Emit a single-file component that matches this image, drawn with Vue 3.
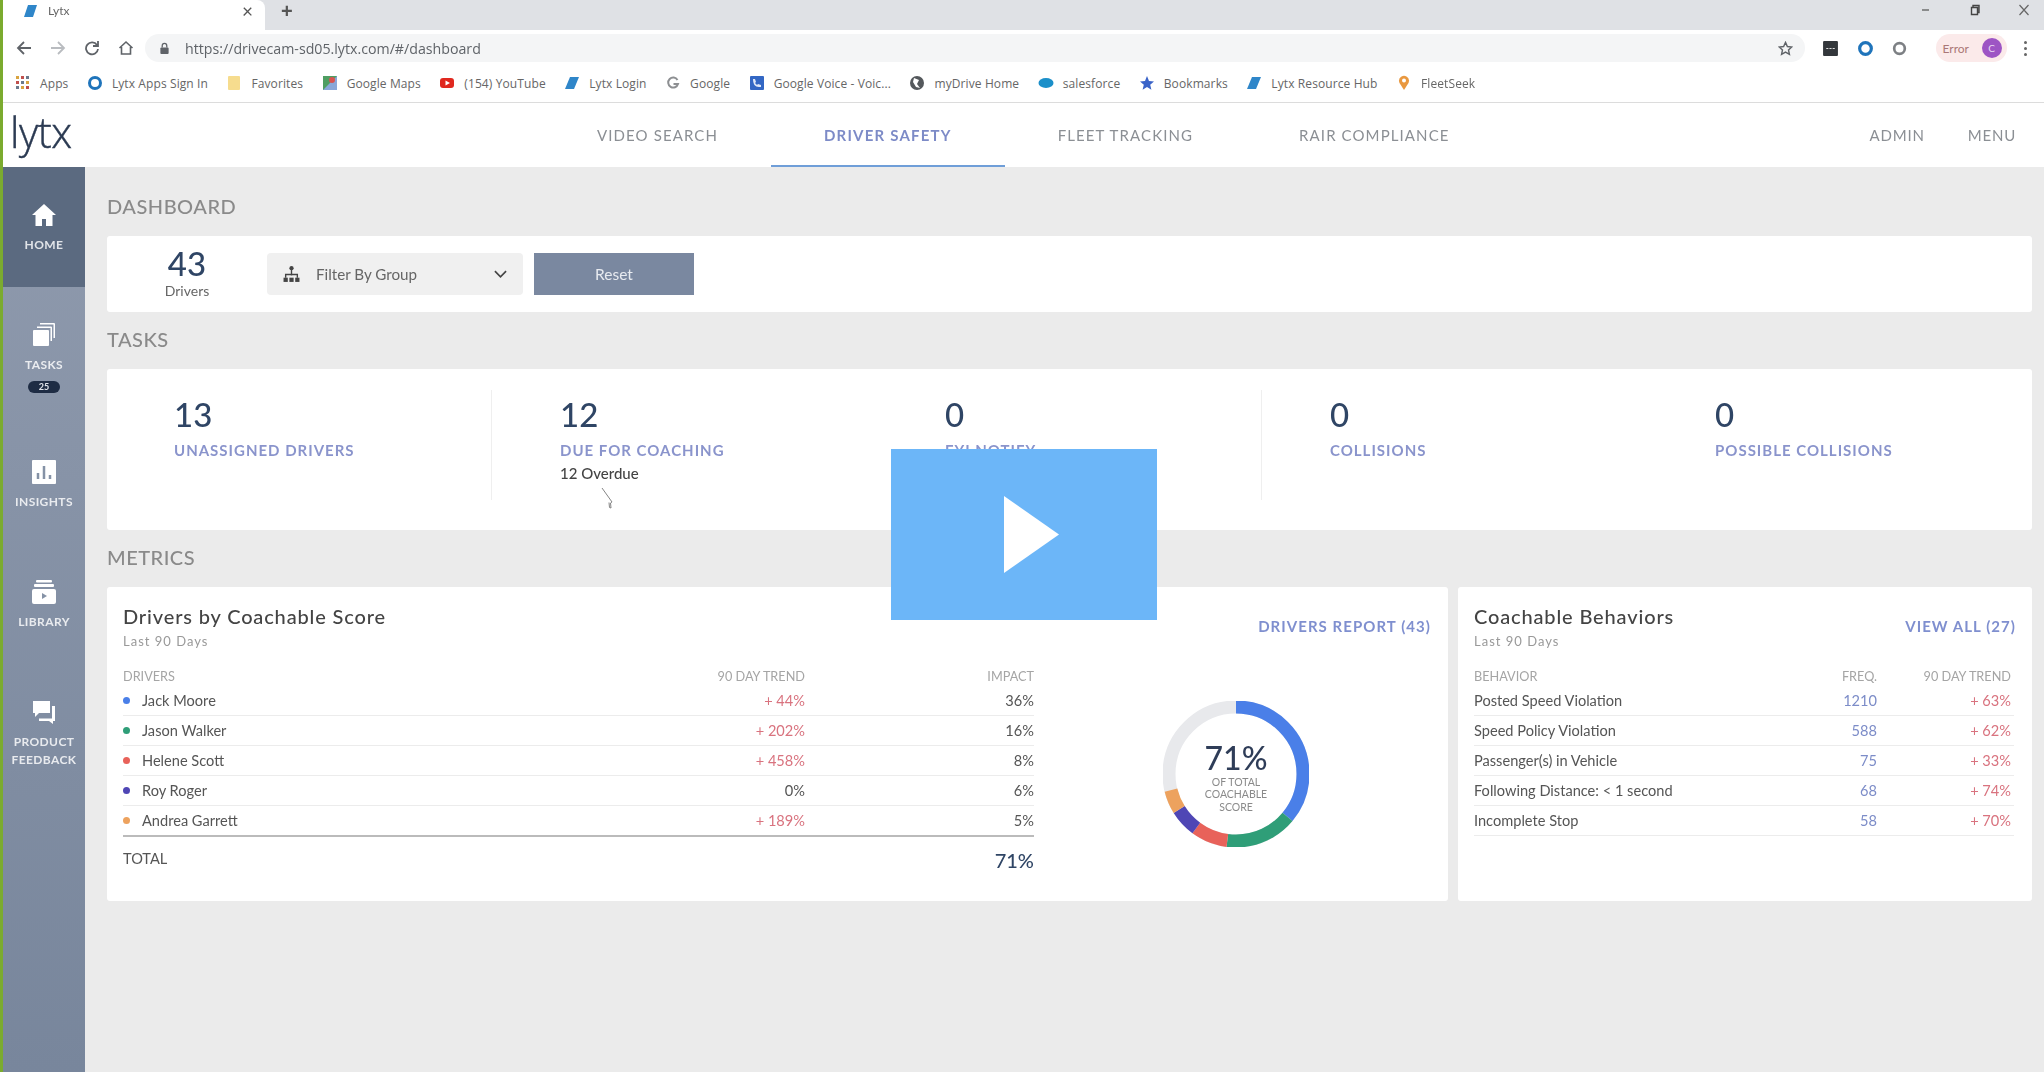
<script setup>
const bookmarks = [
  { label: 'Apps', icon: 'apps' },
  { label: 'Lytx Apps Sign In', icon: 'ring' },
  { label: 'Favorites', icon: 'folder' },
  { label: 'Google Maps', icon: 'maps' },
  { label: '(154) YouTube', icon: 'youtube' },
  { label: 'Lytx Login', icon: 'lytx' },
  { label: 'Google', icon: 'google' },
  { label: 'Google Voice - Voic...', icon: 'voice' },
  { label: 'myDrive Home', icon: 'globe' },
  { label: 'salesforce', icon: 'cloud' },
  { label: 'Bookmarks', icon: 'star' },
  { label: 'Lytx Resource Hub', icon: 'lytx' },
  { label: 'FleetSeek', icon: 'pin' },
];

const tasks = [
  { count: 13, label: 'UNASSIGNED DRIVERS', line: true },
  { count: 12, label: 'DUE FOR COACHING', sub: '12 Overdue' },
  { count: 0, label: 'FYI NOTIFY', line: true },
  { count: 0, label: 'COLLISIONS' },
  { count: 0, label: 'POSSIBLE COLLISIONS' },
];

const drivers = [
  { name: 'Jack Moore', trend: '+ 44%', impact: 36, color: '#4a7fe8' },
  { name: 'Jason Walker', trend: '+ 202%', impact: 16, color: '#2f9e78' },
  { name: 'Helene Scott', trend: '+ 458%', impact: 8, color: '#e8625a' },
  { name: 'Roy Roger', trend: '0%', impact: 6, color: '#4f46b5' },
  { name: 'Andrea Garrett', trend: '+ 189%', impact: 5, color: '#eda25e' },
];

const behaviors = [
  { name: 'Posted Speed Violation', freq: 1210, trend: '+ 63%' },
  { name: 'Speed Policy Violation', freq: 588, trend: '+ 62%' },
  { name: 'Passenger(s) in Vehicle', freq: 75, trend: '+ 33%' },
  { name: 'Following Distance: < 1 second', freq: 68, trend: '+ 74%' },
  { name: 'Incomplete Stop', freq: 58, trend: '+ 70%' },
];

const circ = 2 * Math.PI * 67;
let acc = 0;
const arcs = drivers.map((d) => {
  const arc = { color: d.color, dash: `${(d.impact / 100) * circ} ${circ}`, offset: -(acc / 100) * circ };
  acc += d.impact;
  return arc;
});
</script>

<template>
  <div class="page">
    <div class="blurred">
      <div class="tabstrip">
        <div class="tab">
          <svg class="fav" viewBox="0 0 16 16"><path d="M5 2h9l-4 12H1z" fill="#2f86c9" /></svg>
          <span class="tab-title">Lytx</span>
          <span class="tab-x">×</span>
        </div>
        <span class="tab-plus">+</span>
        <div class="winctl">
          <svg viewBox="0 0 12 12"><path d="M2 6h7" stroke="#666" stroke-width="1.4" /></svg>
          <svg viewBox="0 0 12 12"><path d="M2.5 3.5h6v7h-6zM4 3.5V1.5h6v7H8.500" fill="none" stroke="#444" stroke-width="1.4" /></svg>
          <svg viewBox="0 0 12 12"><path d="M1.500 1l9 10M10.500 1l-9 10" stroke="#666" stroke-width="1.200" /></svg>
        </div>
      </div>

      <div class="toolbar">
        <svg class="tool" viewBox="0 0 16 16"><path d="M15 8H2M8 2L2 8l6 6" fill="none" stroke="#5f6368" stroke-width="1.800" /></svg>
        <svg class="tool" viewBox="0 0 16 16"><path d="M1 8h13M8 2l6 6-6 6" fill="none" stroke="#b9bcc0" stroke-width="1.800" /></svg>
        <svg class="tool" viewBox="0 0 16 16"><path d="M13 5a6 6 0 1 0 1 4M14 1v5H9" fill="none" stroke="#5f6368" stroke-width="1.800" /></svg>
        <svg class="tool" viewBox="0 0 16 16"><path d="M1.500 8L8 2l6.500 6M3.500 7v7h9V7" fill="none" stroke="#5f6368" stroke-width="1.600" /></svg>
        <div class="omnibox">
          <svg class="lock" viewBox="0 0 12 14"><rect x="1.500" y="6" width="9" height="7" rx="1" fill="#5f6368" /><path d="M3.500 6V4a2.500 2.500 0 0 1 5 0v2" fill="none" stroke="#5f6368" stroke-width="1.400" /></svg>
          <span class="url">https://drivecam-sd05.lytx.com/#/dashboard</span>
          <svg class="star" viewBox="0 0 16 16"><path d="M8 1.500l2 4.400 4.700.5-3.500 3.200 1 4.700L8 11.900 3.800 14.300l1-4.700L1.300 6.400 6 5.900z" fill="none" stroke="#5f6368" stroke-width="1.500" /></svg>
        </div>
        <div class="ext">
          <svg class="ext-icon" viewBox="0 0 16 16"><rect x="1" y="1" width="14" height="14" rx="1" fill="#33373b" /><path d="M4 8h8" stroke="#ddd" stroke-dasharray="2 1" /></svg>
          <svg class="ext-icon" viewBox="0 0 16 16"><circle cx="8" cy="8" r="5.500" fill="none" stroke="#1f74bb" stroke-width="3" /></svg>
          <svg class="ext-icon" viewBox="0 0 16 16"><circle cx="8" cy="8" r="5" fill="none" stroke="#7d8084" stroke-width="2.500" /></svg>
          <div class="error-pill"><span>Error</span><i class="avatar">C</i></div>
          <span class="kebab"><i /><i /><i /></span>
        </div>
      </div>

      <div class="bookmarks">
        <div v-for="b in bookmarks" :key="b.label" class="bookmark">
          <svg class="bm-icon" viewBox="0 0 16 16">
            <template v-if="b.icon === 'apps'">
              <g v-for="r in 3" :key="r">
                <rect v-for="c in 3" :key="c" :x="c * 5 - 4" :y="r * 5 - 4" width="3" height="3" :fill="['#c0504d', '#6b7a8c', '#d9a441'][(r + c) % 3]" />
              </g>
            </template>
            <circle v-else-if="b.icon === 'ring'" cx="8" cy="8" r="5.500" fill="none" stroke="#1f74bb" stroke-width="3" />
            <rect v-else-if="b.icon === 'folder'" x="2" y="1" width="12" height="14" rx="1" fill="#f6dc8e" />
            <g v-else-if="b.icon === 'maps'">
              <rect x="1" y="1" width="14" height="14" fill="#4f9e62" />
              <path d="M1 15L15 1v14z" fill="#8aa7d8" />
              <circle cx="10" cy="5" r="3" fill="#d9534f" />
            </g>
            <g v-else-if="b.icon === 'youtube'">
              <rect x="1" y="3" width="14" height="10" rx="3" fill="#e0281f" />
              <path d="M6.500 5.500L11 8l-4.500 2.500z" fill="#fff" />
            </g>
            <path v-else-if="b.icon === 'lytx'" d="M6 2h9l-5 12H1z" fill="#2f86c9" />
            <path v-else-if="b.icon === 'google'" d="M12.500 5A5 5 0 1 0 13 9H8.500" fill="none" stroke="#8d8f92" stroke-width="2" />
            <g v-else-if="b.icon === 'voice'">
              <rect x="1" y="1" width="14" height="14" rx="1" fill="#3367c4" />
              <path d="M4 4l2 0 1 3-1 1 2 2 1-1 3 1v2h-2C6 12 4 9 4 4z" fill="#dfe8f8" />
            </g>
            <g v-else-if="b.icon === 'globe'">
              <circle cx="8" cy="8" r="7" fill="#54585c" />
              <path d="M5 3l5 2-2 4 3 4-4-1-3-5z" fill="#fff" />
            </g>
            <ellipse v-else-if="b.icon === 'cloud'" cx="8" cy="8" rx="7.500" ry="5" fill="#1b8fc9" />
            <path v-else-if="b.icon === 'star'" d="M8 1l2 5 5 .4-3.800 3.300 1.200 5L8 12 3.600 14.700l1.200-5L1 6.400 6 6z" fill="#3a63c8" />
            <g v-else-if="b.icon === 'pin'">
              <path d="M8 15L3.500 8a5 5 0 1 1 9 0z" fill="#e9983f" />
              <circle cx="8" cy="5.500" r="2" fill="#fff" />
            </g>
          </svg>
          <span>{{ b.label }}</span>
        </div>
      </div>

      <header class="topnav">
        <div class="logo">lytx</div>
        <a class="nav-item">VIDEO SEARCH</a>
        <a class="nav-item active">DRIVER SAFETY</a>
        <a class="nav-item">FLEET TRACKING</a>
        <a class="nav-item">RAIR COMPLIANCE</a>
        <div class="nav-right">
          <a>ADMIN</a>
          <a>MENU</a>
        </div>
      </header>

      <div class="shell">
        <aside class="sidebar">
          <div class="side-item home">
            <svg class="side-icon" viewBox="0 0 24 24"><path d="M12 1L0 12h3.500v11H10v-7h4v7h6.500V12H24z" fill="#fff" /></svg>
            <span class="side-label">HOME</span>
          </div>
          <div class="side-item tasks">
            <svg class="side-icon" viewBox="0 0 24 24">
              <path d="M8 0h14a1 1 0 0 1 1 1v14h-1.500V1.500H8z" fill="#fff" />
              <path d="M5 3.500h14a1 1 0 0 1 1 1V18h-1.500V5H5z" fill="#fff" />
              <rect x="1" y="7" width="16" height="16" rx="1" fill="#fff" />
            </svg>
            <span class="side-label">TASKS</span>
            <span class="badge">25</span>
          </div>
          <div class="side-item">
            <svg class="side-icon" viewBox="0 0 24 24">
              <rect width="24" height="24" rx="1" fill="#fff" />
              <path d="M6 13v6M12 6v13M18 15v4" stroke="#8592a6" stroke-width="2.500" />
            </svg>
            <span class="side-label">INSIGHTS</span>
          </div>
          <div class="side-item">
            <svg class="side-icon" viewBox="0 0 24 24">
              <rect x="4" y="0" width="16" height="2.500" rx="1" fill="#fff" />
              <rect x="2" y="4" width="20" height="3" rx="1" fill="#fff" />
              <rect y="9" width="24" height="15" rx="2" fill="#fff" />
              <path d="M10 13l5 3-5 3z" fill="#8592a6" />
            </svg>
            <span class="side-label">LIBRARY</span>
          </div>
          <div class="side-item">
            <svg class="side-icon" viewBox="0 0 24 24">
              <path d="M1 1h17v12H7l-4 4v-4H1z" fill="#fff" />
              <path d="M20 6h3v15h-2v3l-4-3H7v-2.500h13z" fill="#fff" />
            </svg>
            <span class="side-label">PRODUCT FEEDBACK</span>
          </div>
        </aside>

        <main class="content">
          <h2 class="section-title">DASHBOARD</h2>
          <section class="card filter-bar">
            <div class="count">
              <strong>43</strong>
              <span>Drivers</span>
            </div>
            <div class="filter">
              <svg class="org" viewBox="0 0 16 16">
                <circle cx="8" cy="2" r="2" fill="#444" />
                <path d="M8 3v6M2.500 11V8h11v3" fill="none" stroke="#444" stroke-width="1.300" />
                <rect x="0.500" y="11" width="4" height="4" fill="#444" />
                <rect x="6" y="11" width="4" height="4" fill="#444" />
                <rect x="11.500" y="11" width="4" height="4" fill="#444" />
              </svg>
              <span>Filter By Group</span>
              <svg class="chev" viewBox="0 0 14 8"><path d="M1 1l6 6 6-6" fill="none" stroke="#444" stroke-width="1.800" /></svg>
            </div>
            <button class="reset">Reset</button>
          </section>

          <h2 class="section-title">TASKS</h2>
          <section class="card task-grid">
            <div v-for="t in tasks" :key="t.label" class="task" :class="{ line: t.line }">
              <div class="task-num">{{ t.count }}</div>
              <div class="task-label">{{ t.label }}</div>
              <div v-if="t.sub" class="task-sub">{{ t.sub }}</div>
            </div>
            <svg class="cursor" viewBox="0 0 14 24"><path d="M1 1l10 14-1.500 1 .5 5-1.500-.5-.5-5" fill="none" stroke="#777" stroke-width=".9" /></svg>
          </section>

          <h2 class="section-title">METRICS</h2>
          <section class="metrics">
            <div class="card metric drivers">
              <div class="metric-head">
                <div>
                  <h3>Drivers by Coachable Score</h3>
                  <p>Last 90 Days</p>
                </div>
                <a class="link">DRIVERS REPORT (43)</a>
              </div>
              <div class="drivers-body">
                <div class="table">
                  <div class="row head">
                    <span>DRIVERS</span>
                    <span class="r">90 DAY TREND</span>
                    <span class="r">IMPACT</span>
                  </div>
                  <div v-for="d in drivers" :key="d.name" class="row">
                    <span class="who"><i class="dot" :style="{ background: d.color }" />{{ d.name }}</span>
                    <span class="r" :class="{ red: d.trend !== '0%' }">{{ d.trend }}</span>
                    <span class="r">{{ d.impact }}%</span>
                  </div>
                  <div class="total">
                    <span>TOTAL</span>
                    <strong>71%</strong>
                  </div>
                </div>
                <div class="donut">
                  <svg viewBox="0 0 146 146">
                    <circle cx="73" cy="73" r="67" fill="none" stroke="#e8e9ec" stroke-width="13" />
                    <circle
                      v-for="a in arcs"
                      :key="a.color"
                      cx="73"
                      cy="73"
                      r="67"
                      fill="none"
                      :stroke="a.color"
                      stroke-width="13"
                      :stroke-dasharray="a.dash"
                      :stroke-dashoffset="a.offset"
                      transform="rotate(-90 73 73)"
                    />
                  </svg>
                  <div class="donut-text">
                    <strong>71%</strong>
                    <span>OF TOTAL<br />COACHABLE<br />SCORE</span>
                  </div>
                </div>
              </div>
            </div>

            <div class="card metric behaviors">
              <div class="metric-head">
                <div>
                  <h3>Coachable Behaviors</h3>
                  <p>Last 90 Days</p>
                </div>
                <a class="link">VIEW ALL (27)</a>
              </div>
              <div class="table">
                <div class="row head">
                  <span>BEHAVIOR</span>
                  <span class="r">FREQ.</span>
                  <span class="r">90 DAY TREND</span>
                </div>
                <div v-for="b in behaviors" :key="b.name" class="row">
                  <span>{{ b.name }}</span>
                  <span class="r blue">{{ b.freq }}</span>
                  <span class="r red">{{ b.trend }}</span>
                </div>
              </div>
            </div>
          </section>
        </main>
      </div>
    </div>

    <div class="play">
      <svg viewBox="0 0 55 77"><path d="M0 0l55 38.500L0 77z" fill="#fff" /></svg>
    </div>
  </div>
</template>

<style scoped>
.page {
  position: relative;
  width: 2044px;
  height: 1072px;
  overflow: hidden;
  background: #ebebeb;
  font-family: Lato, "Liberation Sans", sans-serif;
  color: #444;
}

.blurred {
  height: 100%;
  display: flex;
  flex-direction: column;
  border-left: 3px solid #7bab2f;
  box-sizing: border-box;
  filter: blur(0.7px);
}

.tabstrip {
  height: 30px;
  flex: none;
  display: flex;
  align-items: flex-start;
  background: #dfe1e5;
}

.tab {
  width: 262px;
  height: 30px;
  display: flex;
  align-items: center;
  box-sizing: border-box;
  padding: 0 12px 9px 20px;
  background: #fff;
  border-top-right-radius: 8px;
}

.fav {
  width: 16px;
  height: 16px;
  margin-right: 9px;
}

.tab-title {
  flex: 1;
  font-size: 12px;
  line-height: 16px;
  color: #666;
}

.tab-x {
  font-size: 19px;
  line-height: 16px;
  color: #555;
}

.tab-plus {
  margin-left: 16px;
  font-size: 20px;
  line-height: 23px;
  font-weight: 700;
  color: #555;
  font-family: "Liberation Sans", sans-serif;
}

.winctl {
  margin-left: auto;
  display: flex;
  gap: 37px;
  padding: 4px 14px 0 0;
}

.winctl svg {
  width: 12px;
  height: 12px;
}

.toolbar {
  height: 34px;
  flex: none;
  display: flex;
  align-items: center;
  background: #fff;
  padding-left: 13px;
  box-sizing: border-box;
}

.tool {
  width: 16px;
  height: 16px;
  margin: 2px 18px 0 0;
}

.tool:nth-child(4) {
  margin-right: 11px;
}

.omnibox {
  width: 1660px;
  height: 28px;
  margin-top: 2px;
  display: flex;
  align-items: center;
  box-sizing: border-box;
  padding: 0 12px 0 14px;
  background: #f4f5f6;
  border-radius: 14px;
}

.lock {
  width: 11px;
  height: 13px;
  margin-right: 15px;
}

.url {
  flex: 1;
  font-family: "Open Sans", sans-serif;
  font-size: 14.200px;
  color: #5f6368;
}

.star {
  width: 15px;
  height: 15px;
}

.ext {
  display: flex;
  align-items: center;
  padding: 2px 0 0 17px;
}

.ext-icon {
  width: 17px;
  height: 17px;
  margin-right: 17.500px;
}

.error-pill {
  width: 71px;
  height: 28px;
  display: flex;
  align-items: center;
  justify-content: space-between;
  box-sizing: border-box;
  padding: 0 5px 0 7px;
  margin-left: 10px;
  background: #fbeaea;
  border-radius: 14px;
  font-size: 12px;
  color: #a77;
}

.avatar {
  width: 20px;
  height: 20px;
  border-radius: 50%;
  background: #9d55c4;
  color: #e9d8f3;
  font-style: normal;
  font-size: 10px;
  line-height: 20px;
  text-align: center;
}

.kebab {
  display: flex;
  flex-direction: column;
  gap: 3px;
  margin-left: 17px;
}

.kebab i {
  width: 3px;
  height: 3px;
  border-radius: 50%;
  background: #666;
}

.bookmarks {
  height: 38px;
  flex: none;
  display: flex;
  align-items: center;
  gap: 18.500px;
  padding-left: 12px;
  background: #fff;
  border-bottom: 1px solid #dcdcdc;
  box-sizing: content-box;
  font-family: "Open Sans", sans-serif;
  font-size: 12px;
  color: #666;
  letter-spacing: 0.1px;
}

.bookmark {
  display: flex;
  align-items: center;
  gap: 9px;
  white-space: nowrap;
}

.bm-icon {
  width: 16px;
  height: 16px;
}

.topnav {
  height: 64px;
  flex: none;
  display: flex;
  align-items: stretch;
  background: #fff;
}

.logo {
  width: 541px;
  padding-left: 7px;
  box-sizing: border-box;
  font-family: "Open Sans", sans-serif;
  font-weight: 300;
  font-size: 42px;
  line-height: 58px;
  letter-spacing: -0.5px;
  color: #2b3a52;
  -webkit-text-stroke: 0.4px #2b3a52;
}

.nav-item {
  display: flex;
  align-items: center;
  padding: 2px 53px 0;
  font-size: 15px;
  letter-spacing: 1.100px;
  color: #8b8f94;
  border-bottom: 2px solid transparent;
}

.nav-item.active {
  color: #7d8bc7;
  font-weight: 700;
  letter-spacing: 1.200px;
  border-bottom-color: #6f9ed8;
}

.nav-right {
  margin-left: auto;
  display: flex;
  align-items: center;
  gap: 43px;
  padding-right: 28px;
  font-size: 15px;
  letter-spacing: 0.8px;
  color: #8b8f94;
}

.shell {
  flex: 1;
  display: flex;
  min-height: 0;
}

.sidebar {
  width: 82px;
  flex: none;
  background: linear-gradient(180deg, #8f9aad, #78869c);
  color: #fff;
  text-align: center;
}

.side-item {
  display: flex;
  flex-direction: column;
  align-items: center;
  padding: 36px 0 33px;
}

.side-item.home {
  background: #5b6a80;
}

.side-item.tasks {
  padding-bottom: 31px;
}

.side-icon {
  width: 24px;
  height: 24px;
  margin-bottom: 9px;
}

.side-label {
  font-size: 12px;
  line-height: 18px;
  font-weight: 700;
  letter-spacing: 0.4px;
  color: rgba(255, 255, 255, 0.82);
}

.badge {
  width: 32px;
  height: 12px;
  margin-top: 7px;
  border-radius: 6px;
  background: #1e2c44;
  color: #dfe3ea;
  font-size: 9px;
  font-weight: 700;
  line-height: 12px;
}

.content {
  flex: 1;
  min-width: 0;
  padding: 0 12px 0 22px;
}

.section-title {
  margin: 15px 0 18px;
  font-size: 20px;
  line-height: 24px;
  font-weight: 500;
  letter-spacing: 0.5px;
  color: #8a8a8a;
}

.content > .section-title:first-child {
  margin-top: 27px;
}

.card {
  background: #fff;
  border-radius: 3px;
}

.filter-bar {
  height: 76px;
  display: flex;
  align-items: center;
}

.count {
  width: 160px;
  display: flex;
  flex-direction: column;
  align-items: center;
  margin-top: -5px;
}

.count strong {
  font-size: 33px;
  line-height: 38px;
  font-weight: 500;
  color: #2f4565;
}

.count span {
  font-size: 14px;
  line-height: 18px;
  color: #666;
}

.filter {
  width: 256px;
  height: 42px;
  display: flex;
  align-items: center;
  box-sizing: border-box;
  padding: 0 16px;
  background: #f0f0f0;
  border-radius: 4px;
  font-size: 15.200px;
  color: #666;
}

.filter span {
  flex: 1;
}

.org {
  width: 17px;
  height: 17px;
  margin-right: 16px;
}

.chev {
  width: 13px;
  height: 8px;
}

.reset {
  width: 160px;
  height: 42px;
  margin-left: 11px;
  border: none;
  background: #7a88a0;
  color: #e8ebf0;
  font-family: inherit;
  font-size: 15.500px;
}

.task-grid {
  position: relative;
  height: 161px;
  box-sizing: border-box;
  display: grid;
  grid-template-columns: repeat(5, 385px);
  padding-top: 21px;
}

.task {
  height: 110px;
  box-sizing: border-box;
  padding: 4px 0 0 68px;
}

.task:first-child {
  padding-left: 67px;
}

.task.line {
  border-right: 1px solid #efefef;
}

.task-num {
  font-size: 33px;
  line-height: 40px;
  font-weight: 500;
  color: #2f4565;
}

.task-label {
  margin-top: 6px;
  font-size: 15px;
  line-height: 20px;
  font-weight: 700;
  letter-spacing: 1px;
  color: #8a94cc;
}

.task-sub {
  margin-top: 4px;
  font-size: 15px;
  line-height: 18px;
  font-weight: 500;
  color: #444;
}

.cursor {
  position: absolute;
  left: 494px;
  top: 118px;
  width: 14px;
  height: 24px;
}

.metrics {
  display: flex;
  gap: 10px;
}

.metric {
  height: 314px;
  box-sizing: border-box;
  padding: 16px 16px 0;
}

.metric.drivers {
  width: 1341px;
  padding-right: 17px;
}

.metric.behaviors {
  flex: 1;
}

.metric-head {
  display: flex;
  align-items: center;
  justify-content: space-between;
}

.metric-head h3 {
  margin: 0;
  font-size: 20px;
  line-height: 26px;
  font-weight: 500;
  letter-spacing: 0.85px;
  color: #444;
}

.metric-head p {
  margin: 4px 0 0;
  font-size: 13px;
  line-height: 16px;
  letter-spacing: 1px;
  color: #999;
}

.link {
  font-size: 15px;
  font-weight: 700;
  letter-spacing: 1.05px;
  color: #7f8fcf;
}

.drivers-body {
  display: flex;
}

.drivers-body .table {
  width: 911px;
  flex: none;
}

.table {
  margin-top: 18px;
}

.behaviors .table {
  margin-right: 2px;
}

.row {
  display: grid;
  grid-template-columns: 1fr 120px 229px;
  height: 30px;
  align-items: center;
  box-sizing: border-box;
  border-bottom: 1px solid #ececec;
  font-size: 14.600px;
  color: #555;
}

.behaviors .row {
  grid-template-columns: 1fr 100px 134px;
  padding-right: 3px;
}

.row.head {
  height: 19px;
  padding-bottom: 2px;
  border-bottom: none;
  font-size: 12.700px;
  color: #a5a5a5;
}

.r {
  text-align: right;
}

.who {
  display: flex;
  align-items: center;
}

.dot {
  width: 7px;
  height: 7px;
  margin-right: 12px;
  border-radius: 50%;
}

.red {
  color: #d9737f;
}

.blue {
  color: #7c8cc8;
}

.total {
  display: flex;
  justify-content: space-between;
  align-items: flex-start;
  border-top: 2px solid #bbb;
  margin-top: -1px;
  padding-top: 13px;
  font-size: 14.600px;
  color: #555;
}

.total strong {
  margin-top: -2px;
  font-size: 20px;
  line-height: 24px;
  font-weight: 500;
  color: #2f4565;
}

.donut {
  position: relative;
  width: 146px;
  height: 146px;
  margin: 52px 0 0 129px;
  flex: none;
}

.donut svg {
  width: 146px;
  height: 146px;
  display: block;
}

.donut-text {
  position: absolute;
  inset: 0;
  display: flex;
  flex-direction: column;
  align-items: center;
  justify-content: center;
  padding-top: 5px;
  box-sizing: border-box;
  text-align: center;
}

.donut-text strong {
  font-size: 32px;
  line-height: 36px;
  font-weight: 500;
  color: #2f3d58;
}

.donut-text span {
  font-size: 10.500px;
  line-height: 12.500px;
  color: #8a8a8a;
}

.play {
  position: absolute;
  left: 891px;
  top: 449px;
  width: 266px;
  height: 171px;
  display: flex;
  align-items: center;
  justify-content: center;
  background: #6cb6f8;
}

.play svg {
  width: 55px;
  height: 77px;
  margin-left: 14px;
}
</style>

<style>
html,
body {
  margin: 0;
  overflow: hidden;
}
</style>
